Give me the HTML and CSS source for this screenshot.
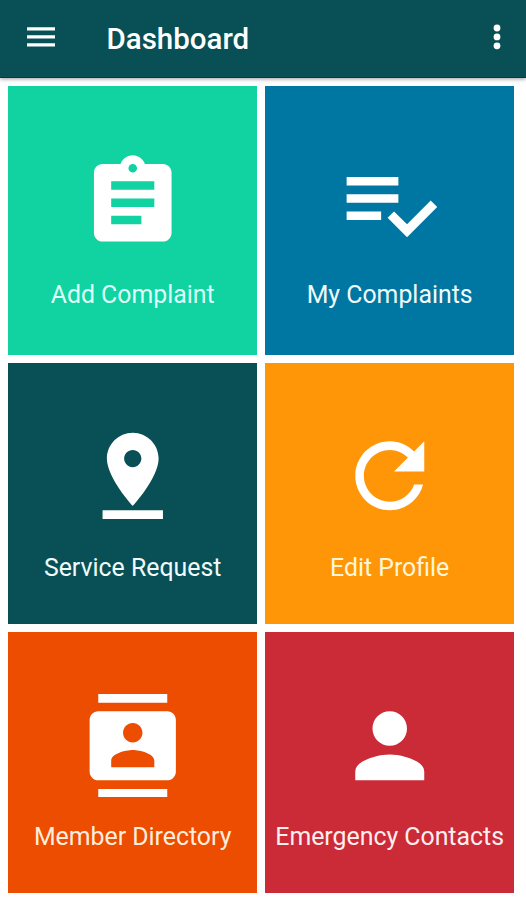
FILE: index.html
```html
<!DOCTYPE html>
<html lang="en">
<head>
<meta charset="utf-8">
<title>Dashboard</title>
<link rel="stylesheet" href="styles.css">
</head>
<body>
<header class="bar">
  <svg class="menu" viewBox="0 0 28 22"><path d="M0 1.200h28v3.200H0zM0 9.200h28v3.200H0zM0 17.200h28v3.200H0z"/></svg>
  <h1 class="title">Dashboard</h1>
  <svg class="more" viewBox="0 0 8 26"><circle cx="4" cy="4" r="3.4"/><circle cx="4" cy="12.900" r="3.4"/><circle cx="4" cy="21.800" r="3.4"/></svg>
</header>
<main class="grid">
  <a class="tile green">
    <svg class="icon" viewBox="0 0 24 24"><path d="M19 3h-4.180C14.400 1.840 13.300 1 12 1c-1.300 0-2.400.84-2.820 2H5c-1.100 0-2 .9-2 2v14c0 1.100.9 2 2 2h14c1.100 0 2-.9 2-2V5c0-1.100-.9-2-2-2zm-7 0c.55 0 1 .45 1 1s-.45 1-1 1-1-.45-1-1 .45-1 1-1zm2 14H7v-2h7v2zm3-4H7v-2h10v2zm0-4H7V7h10v2z"/></svg>
    <span class="label">Add Complaint</span>
  </a>
  <a class="tile blue">
    <svg class="icon" viewBox="0 0 24 24"><path d="M14 10H2v2h12v-2zm0-4H2v2h12V6zM2 16h8v-2H2v2zm19.500-4.500L23 13l-6.990 7-4.510-4.500L13 14l3.010 3 5.490-5.500z"/></svg>
    <span class="label">My Complaints</span>
  </a>
  <a class="tile teal">
    <svg class="icon" viewBox="0 0 24 24"><path d="M18 8c0-3.310-2.690-6-6-6S6 4.690 6 8c0 4.500 6 11 6 11s6-6.500 6-11zm-8 0c0-1.100.9-2 2-2s2 .9 2 2-.89 2-2 2c-1.100 0-2-.9-2-2zM5 20v2h14v-2H5z"/></svg>
    <span class="label">Service Request</span>
  </a>
  <a class="tile amber">
    <svg class="icon" viewBox="0 0 24 24"><path d="M17.650 6.350C16.200 4.900 14.210 4 12 4c-4.420 0-7.990 3.580-7.990 8s3.570 8 7.990 8c3.730 0 6.840-2.550 7.730-6h-2.080c-.82 2.330-3.040 4-5.650 4-3.310 0-6-2.690-6-6s2.690-6 6-6c1.660 0 3.140.69 4.220 1.780L13 11h7V4l-2.350 2.350z"/></svg>
    <span class="label">Edit Profile</span>
  </a>
  <a class="tile orange">
    <svg class="icon" viewBox="0 0 24 24"><path d="M20 0H4v2h16V0zM4 24h16v-2H4v2zM20 4H4c-1.100 0-2 .9-2 2v12c0 1.100.9 2 2 2h16c1.100 0 2-.9 2-2V6c0-1.100-.9-2-2-2zm-8 2.750c1.240 0 2.250 1.010 2.250 2.250s-1.010 2.250-2.250 2.250S9.750 10.240 9.750 9 10.760 6.750 12 6.750zM17 17H7v-1.500c0-1.670 3.330-2.500 5-2.500s5 .83 5 2.500V17z"/></svg>
    <span class="label">Member Directory</span>
  </a>
  <a class="tile red">
    <svg class="icon" viewBox="0 0 24 24"><path d="M12 12c2.210 0 4-1.790 4-4s-1.790-4-4-4-4 1.790-4 4 1.790 4 4 4zm0 2c-2.670 0-8 1.340-8 4v2h16v-2c0-2.660-5.330-4-8-4z"/></svg>
    <span class="label">Emergency Contacts</span>
  </a>
</main>
</body>
</html>
```
FILE: styles.css
```css
* { box-sizing: border-box; }
body {
  margin: 0;
  height: 900px;
  background: #fff;
  font-family: Roboto, "Liberation Sans", sans-serif;
  overflow: hidden;
}
svg { display: block; fill: #fff; flex: none; }
.bar {
  display: flex;
  align-items: center;
  height: 78px;
  padding: 0 25px 2px 27px;
  background: #085056;
  border-bottom: 1px solid #043a45;
  box-shadow: 0 1px 4px rgba(0, 0, 0, .4);
}
.menu { width: 28px; height: 22px; margin-bottom: 1px; }
.title {
  flex: 1;
  margin: 3px 0 0 51.500px;
  color: #fff;
  font-size: 29.500px;
  font-weight: 500;
  line-height: 36px;
}
.more { width: 8px; height: 26px; margin-bottom: 1px; }
.grid {
  display: grid;
  grid-template-columns: 249.300px 249.300px;
  grid-template-rows: 268.700px 261.300px 260.700px;
  gap: 8px 7.700px;
  padding: 8px 0 0 8px;
}
.tile {
  display: flex;
  flex-direction: column;
  align-items: center;
  padding-top: 61.700px;
  color: #f0fbfb;
}
.green { background: #11d2a1; color: #dcfff6; }
.blue { background: #0076a3; }
.green, .blue { padding-top: 65.300px; }
.teal { background: #085056; }
.amber { background: #ff9608; color: #fff6d8; }
.orange { background: #ec4d00; color: #ffeedd; }
.red { background: #cb2a37; color: #ffeeee; }
.icon { width: 103.500px; height: 103.500px; }
.label {
  margin-top: 24.300px;
  font-size: 24.850px;
  line-height: 32px;
  white-space: nowrap;
}
```
